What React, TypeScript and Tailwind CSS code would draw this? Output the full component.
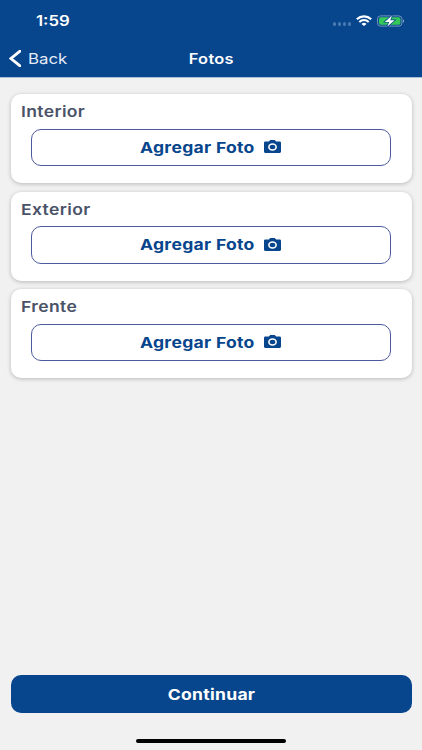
import { clsx } from "clsx";

type LabelProps = {
  text: string;
  className?: string;
};

type PhotoCardProps = {
  title: string;
};

const sections = ["Interior", "Exterior", "Frente"];

// Wide lettering used all over the app
function Label({ text, className }: LabelProps) {
  return (
    <span className={clsx("inline-block whitespace-nowrap", className)}>
      {text}
    </span>
  );
}

function WifiIcon() {
  return (
    <svg className="h-[11px] w-4" viewBox="0 0 16 11" fill="none">
      <path d="M.8 4.2a10.6 10.6 0 0 1 14.4 0" stroke="white" strokeWidth="2.2" />
      <path d="M3.3 6.9a6.9 6.9 0 0 1 9.4 0" stroke="white" strokeWidth="2" />
      <path d="M8 11 5.5 8.9a3.6 3.6 0 0 1 5 0Z" fill="white" />
    </svg>
  );
}

function BatteryIcon() {
  return (
    <svg className="h-3 w-7" viewBox="0 0 28 12" fill="none">
      <rect x="0.5" y="0.9" width="24.4" height="10.2" rx="3" stroke="#7096bd" />
      <rect x="2" y="2.3" width="21.4" height="7.4" rx="1.7" fill="#34c759" />
      <path d="M26 4.2c1.4.5 1.4 3.1 0 3.6Z" fill="#8eabc9" />
      <path
        d="M15 .5 7.8 6.9h4.3l-1.7 4.7 7.2-6.4h-4.3Z"
        fill="white"
        stroke="#07458d"
        strokeWidth="1.4"
        paintOrder="stroke"
      />
    </svg>
  );
}

function CameraIcon() {
  return (
    <svg className="-mt-px h-[13px] w-[17px]" viewBox="0 0 17 13" fill="none">
      <path
        d="M1.3 1.4h3.6L6.2 0h4.6l1.3 1.4h3.6c.8 0 1.3.6 1.3 1.4v8.8c0 .8-.5 1.4-1.3 1.4H1.3C.5 13 0 12.4 0 11.6V2.8c0-.8.5-1.4 1.3-1.4Z"
        fill="#07458d"
      />
      <ellipse cx="8.5" cy="7" rx="3.6" ry="3" stroke="white" strokeWidth="1.6" />
    </svg>
  );
}

function StatusBar() {
  return (
    <div className="flex h-[41px] items-center justify-between pr-[17px] pl-9">
      <Label
        text="1:59"
        className="mt-px origin-left scale-x-[1.16] text-[14.5px] leading-5 font-semibold"
      />
      <div className="flex items-center">
        <div className="mt-[7px] flex gap-[1.5px]">
          <i className="size-[3.5px] rounded-[1.5px] bg-[#477ab0]" />
          <i className="size-[3.5px] rounded-[1.5px] bg-[#477ab0]" />
          <i className="size-[3.5px] rounded-[1.5px] bg-[#477ab0]" />
          <i className="size-[3.5px] rounded-[1.5px] bg-[#477ab0]" />
        </div>
        <div className="ml-[5px]">
          <WifiIcon />
        </div>
        <div className="ml-[5px]">
          <BatteryIcon />
        </div>
      </div>
    </div>
  );
}

function NavBar() {
  return (
    <div className="grid h-[35px] grid-cols-3 items-center px-[9px]">
      <div className="flex items-center gap-[7px]">
        <svg className="h-[17px] w-3" viewBox="0 0 12 17" fill="none">
          <path d="M11 1.2 2 8.5l9 7.3" stroke="white" strokeWidth="2.8" strokeLinecap="round" />
        </svg>
        <Label
          text="Back"
          className="origin-left scale-x-[1.16] text-[14.5px] leading-5 text-[#e4ecf6]"
        />
      </div>
      <div className="flex justify-center">
        <Label
          text="Fotos"
          className="scale-x-[1.17] text-[14px] leading-5 font-semibold tracking-[0.25px]"
        />
      </div>
    </div>
  );
}

function PhotoCard({ title }: PhotoCardProps) {
  return (
    <section className="h-[89px] rounded-[10px] bg-white px-[10.5px] pt-2 shadow-[0_1px_4px_rgba(0,0,0,0.24)]">
      <h2 className="flex h-[26.5px] text-[15px] leading-5 font-semibold text-[#4a5268]">
        <Label text={title} className="origin-left scale-x-[1.17] tracking-[0.3px]" />
      </h2>
      <button className="mx-auto flex h-[37.5px] w-[360px] items-center justify-center rounded-[10px] border border-[#4c5ba0] text-[#07458d]">
        <div className="mr-px flex w-[141.5px] items-center justify-between">
          <Label
            text="Agregar Foto"
            className="mt-px origin-left scale-x-[1.17] text-[15px] leading-5 font-bold tracking-[0.25px]"
          />
          <CameraIcon />
        </div>
      </button>
    </section>
  );
}

export default function App() {
  return (
    <div className="flex h-[750px] w-[422px] flex-col overflow-hidden bg-[#f1f1f1] font-[Inter,sans-serif]">
      <header className="h-[77.5px] border-b border-[#a9bedb] bg-[#07458d] text-white">
        <StatusBar />
        <NavBar />
      </header>
      <main className="flex grow flex-col gap-[8.5px] px-[10.5px] pt-[16.5px]">
        {sections.map((title) => (
          <PhotoCard key={title} title={title} />
        ))}
      </main>
      <footer className="flex h-[75px] flex-col items-center px-[10.5px]">
        <button className="h-[37.5px] w-full rounded-[10px] bg-[#07458d] text-white">
          <Label
            text="Continuar"
            className="scale-x-[1.17] text-[15px] leading-5 font-bold tracking-[0.25px]"
          />
        </button>
        <div className="mt-[26px] h-1 w-[150px] rounded-full bg-black" />
      </footer>
    </div>
  );
}
